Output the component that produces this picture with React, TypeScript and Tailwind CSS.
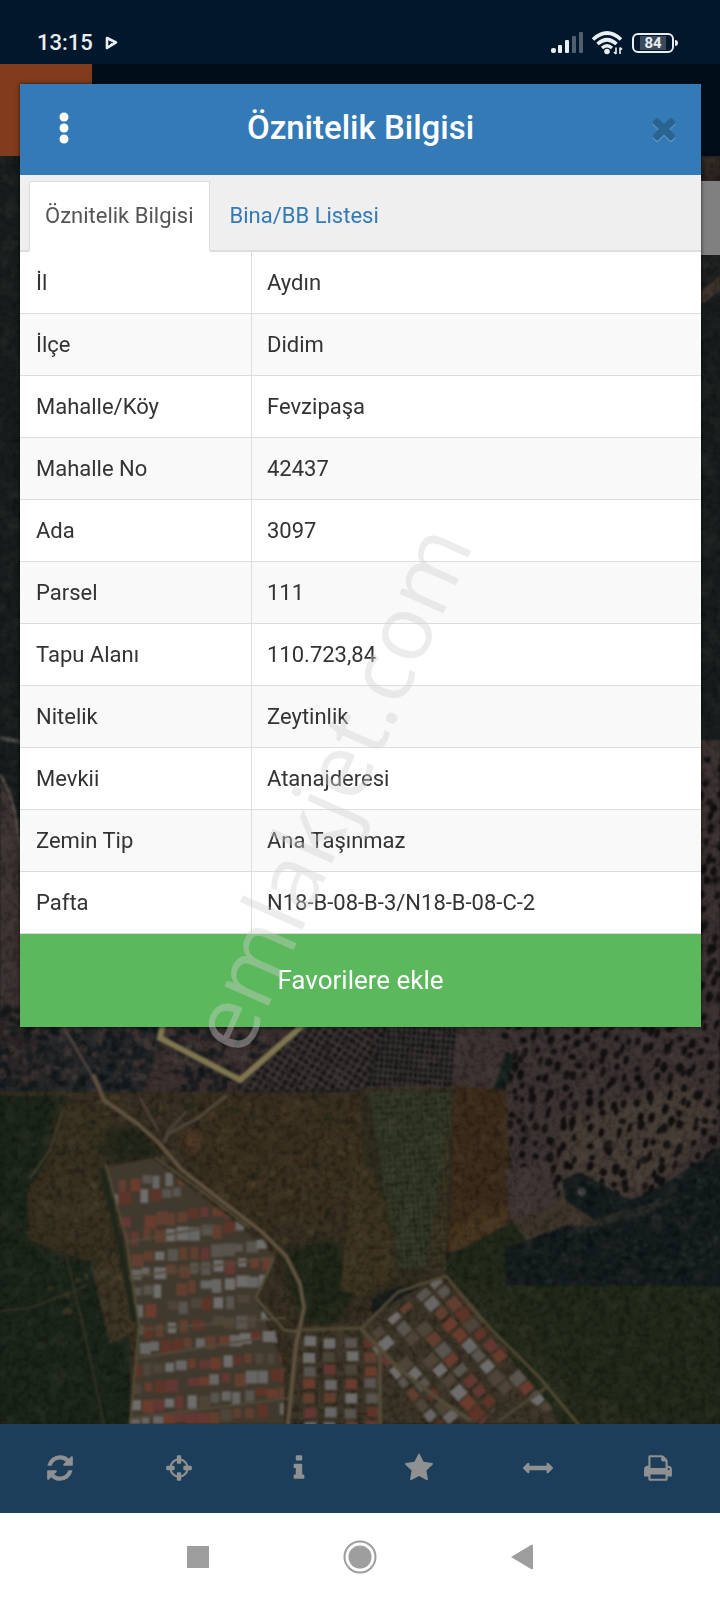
import React, { useState } from "react";

// Small seeded generator so the aerial map always draws the same way
const createRandom = (seed: number) => {
  let s = seed;
  return () => {
    s = (s * 16807) % 2147483647;
    return s / 2147483647;
  };
};

const ATTRIBUTES = [
  { label: "İl", value: "Aydın" },
  { label: "İlçe", value: "Didim" },
  { label: "Mahalle/Köy", value: "Fevzipaşa" },
  { label: "Mahalle No", value: "42437" },
  { label: "Ada", value: "3097" },
  { label: "Parsel", value: "111" },
  { label: "Tapu Alanı", value: "110.723,84" },
  { label: "Nitelik", value: "Zeytinlik" },
  { label: "Mevkii", value: "Atanajderesi" },
  { label: "Zemin Tip", value: "Ana Taşınmaz" },
  { label: "Pafta", value: "N18-B-08-B-3/N18-B-08-C-2" },
];

const TOOLS = [
  {
    name: "Yenile",
    path: "M1639 1056q0 5-1 7-64 268-268 434.5t-478 166.5q-146 0-282.5-55t-243.5-157l-129 129q-19 19-45 19t-45-19-19-45v-448q0-26 19-45t45-19h448q26 0 45 19t19 45-19 45l-137 137q71 66 161 102t187 36q134 0 250-65t186-179q11-17 53-117 8-23 30-23h192q13 0 22.5 9.5t9.5 22.5zm25-800v448q0 26-19 45t-45 19h-448q-26 0-45-19t-19-45 19-45l138-138q-148-137-349-137-134 0-250 65t-186 179q-11 17-53 117-8 23-30 23h-199q-13 0-22.5-9.5t-9.5-22.5v-7q65-268 270-434.5t480-166.5q146 0 284 55.5t245 156.5l130-129q19-19 45-19t45 19 19 45z",
  },
  {
    name: "Konum",
    path: "M1325 1024h-109q-26 0-45-19t-19-45v-128q0-26 19-45t45-19h109q-32-108-112.5-188.5t-188.5-112.5v109q0 26-19 45t-45 19h-128q-26 0-45-19t-19-45v-109q-108 32-188.5 112.5t-112.5 188.5h109q26 0 45 19t19 45v128q0 26-19 45t-45 19h-109q32 108 112.5 188.5t188.5 112.5v-109q0-26 19-45t45-19h128q26 0 45 19t19 45v109q108-32 188.5-112.5t112.5-188.5zm339-192v128q0 26-19 45t-45 19h-143q-37 161-154.5 278.5t-278.5 154.5v143q0 26-19 45t-45 19h-128q-26 0-45-19t-19-45v-143q-161-37-278.5-154.5t-154.5-278.5h-143q-26 0-45-19t-19-45v-128q0-26 19-45t45-19h143q37-161 154.5-278.5t278.5-154.5v-143q0-26 19-45t45-19h128q26 0 45 19t19 45v143q161 37 278.5 154.5t154.5 278.5h143q26 0 45 19t19 45z",
  },
  {
    name: "Bilgi",
    path: "M1216 1344v128q0 26-19 45t-45 19h-512q-26 0-45-19t-19-45v-128q0-26 19-45t45-19h64v-384h-64q-26 0-45-19t-19-45v-128q0-26 19-45t45-19h384q26 0 45 19t19 45v576h64q26 0 45 19t19 45zm-128-1152v192q0 26-19 45t-45 19h-256q-26 0-45-19t-19-45v-192q0-26 19-45t45-19h256q26 0 45 19t19 45z",
  },
  {
    name: "Favoriler",
    path: "M1728 647q0 22-26 48l-363 354 86 500q1 7 1 20 0 21-10.5 35.5t-30.5 14.5q-19 0-40-12l-449-236-449 236q-22 12-40 12-21 0-31.5-14.5t-10.5-35.5q0-6 2-20l86-500-364-354q-25-27-25-48 0-37 56-46l502-73 225-455q19-41 49-41t49 41l225 455 502 73q56 9 56 46z",
  },
  {
    name: "Ölçüm",
    path: "M1792 896q0 26-19 45l-256 256q-19 19-45 19t-45-19-19-45v-128h-1024v128q0 26-19 45t-45 19-45-19l-256-256q-19-19-19-45t19-45l256-256q19-19 45-19t45 19 19 45v128h1024v-128q0-26 19-45t45-19 45 19l256 256q19 19 19 45z",
  },
  {
    name: "Yazdır",
    path: "M448 1536h896v-256h-896v256zm0-640h896v-384h-160q-40 0-68-28t-28-68v-160h-640v640zm1152 64q0-26-19-45t-45-19-45 19-19 45 19 45 45 19 45-19 19-45zm128 0v416q0 13-9.5 22.5t-22.5 9.5h-224v160q0 40-28 68t-68 28h-960q-40 0-68-28t-28-68v-160h-224q-13 0-22.5-9.5t-9.5-22.5v-416q0-79 56.5-135.5t135.5-56.5h64v-544q0-40 28-68t68-28h672q40 0 88 20t76 48l152 152q28 28 48 76t20 88v256h64q79 0 135.5 56.5t56.5 135.5z",
  },
];

const CLOSE_PATH =
  "M1490 1322q0 40-28 68l-136 136q-28 28-68 28t-68-28l-294-294-294 294q-28 28-68 28t-68-28l-136-136q-28-28-28-68t28-68l294-294-294-294q-28-28-28-68t28-68l136-136q28-28 68-28t68 28l294 294 294-294q28-28 68-28t68 28l136 136q28 28 28 68t-28 68l-294 294 294 294q28 28 28 68z";

const ROOFS = ["#5e3428", "#693c2e", "#633834", "#686664", "#58544e", "#4e4437", "#613f30", "#6f6d6b"];

const buildHouses = () => {
  const rand = createRandom(17);
  const pick = () => ROOFS[Math.floor(rand() * ROOFS.length)];
  const west: React.ReactNode[] = [];
  const south: React.ReactNode[] = [];
  const east: React.ReactNode[] = [];

  [1176, 1190, 1214, 1230, 1252, 1268, 1286, 1304, 1324, 1342, 1364, 1382, 1400, 1417].forEach((y, r) => {
    for (let x = 108; x < 290; x += 10 + rand() * 3) {
      if (rand() < 0.06) continue;
      west.push(
        <rect key={`${r}-${x}`} x={x} y={y - (x - 130) * 0.1 + rand() * 3} width={7 + rand() * 6} height={8 + rand() * 6} fill={pick()} />
      );
    }
  });
  [302, 322, 344, 364].forEach((x) => {
    for (let y = 1336; y < 1424; y += 14) {
      south.push(<rect key={`${x}-${y}`} x={x + rand() * 3} y={y + rand() * 3} width={12} height={10} fill={pick()} />);
    }
  });
  for (let row = -1; row < 9; row++) {
    for (let col = 0; col < 14; col++) {
      if (rand() < 0.08) continue;
      east.push(
        <rect
          key={`${row}-${col}`}
          x={col * 14}
          y={row * 19 - (row % 2) * 3}
          width={9 + rand() * 4}
          height={11 + rand() * 3}
          fill={pick()}
        />
      );
    }
  }
  return { west, south, east };
};

const buildTrees = () => {
  const rand = createRandom(91);
  const plateau: React.ReactNode[] = [];
  const forest: React.ReactNode[] = [];
  const scrub: React.ReactNode[] = [];
  const woods: React.ReactNode[] = [];

  // One tree per loose grid cell keeps the olive grove evenly spread
  for (let gx = 505; gx < 720; gx += 13) {
    for (let gy = 760; gy < 1240; gy += 13) {
      const x = gx + rand() * 11;
      const y = gy + rand() * 11;
      plateau.push(
        <ellipse key={`${gx}-${gy}`} cx={x} cy={y} rx={2 + rand() * 1.8} ry={2.8 + rand() * 3} fill="#131011" transform={`rotate(15 ${x} ${y})`} />
      );
    }
  }
  for (let i = 0; i < 420; i++) {
    forest.push(
      <ellipse key={i} cx={rand() * 320} cy={1000 + rand() * 92} rx={2 + rand() * 4} ry={1.5 + rand() * 4} fill={rand() < 0.7 ? "#10171b" : "#433735"} opacity={0.7} />
    );
  }
  for (let i = 0; i < 300; i++) {
    const x = 50 + rand() * 330;
    scrub.push(
      <ellipse key={i} cx={x} cy={1095 + rand() * 220} rx={1 + rand() * 4} ry={1 + rand() * 3} fill={rand() < 0.55 ? "#1f2618" : "#54452c"} opacity={0.5} />
    );
  }
  for (let i = 0; i < 420; i++) {
    woods.push(
      <ellipse key={i} cx={500 + rand() * 220} cy={1150 + rand() * 136} rx={1.5 + rand() * 3} ry={1 + rand() * 2} fill={rand() < 0.6 ? "#0d1416" : "#232b2b"} opacity={0.8} />
    );
  }
  return { plateau, forest, scrub, woods };
};

const AerialMap = () => {
  const houses = buildHouses();
  const trees = buildTrees();

  return (
    <svg
      className="absolute inset-0 h-full w-full"
      viewBox="0 156 720 1268"
      preserveAspectRatio="xMidYMid slice"
      aria-hidden="true"
    >
      <defs>
        <filter id="grain" x="0" y="0" width="100%" height="100%" colorInterpolationFilters="sRGB">
          <feTurbulence type="fractalNoise" baseFrequency="0.16" numOctaves="4" seed="4" />
          <feColorMatrix values="0 0 0 0 0  0 0 0 0 0  0 0 0 0 0  3 0 0 0 -1.3" />
        </filter>
        <filter id="speckle" x="0" y="0" width="100%" height="100%" colorInterpolationFilters="sRGB">
          <feTurbulence type="fractalNoise" baseFrequency="0.06" numOctaves="4" seed="11" />
          <feColorMatrix values="0 0 0 0 .5  0 0 0 0 .46  0 0 0 0 .4  0 3 0 0 -1.4" />
        </filter>
        <filter id="soften" colorInterpolationFilters="sRGB">
          <feGaussianBlur stdDeviation="0.9" />
        </filter>
        <filter id="patch" colorInterpolationFilters="sRGB">
          <feGaussianBlur stdDeviation="5" />
        </filter>
        <pattern id="orchard" width="7" height="7" patternUnits="userSpaceOnUse" patternTransform="rotate(32)">
          <circle cx="3.5" cy="3.5" r="2.3" fill="#131315" />
        </pattern>
        <pattern id="rows" width="5" height="6" patternUnits="userSpaceOnUse" patternTransform="rotate(5)">
          <rect x="1" y="1" width="3" height="4" fill="#111314" />
        </pattern>
        <pattern id="grove" width="5" height="6" patternUnits="userSpaceOnUse" patternTransform="rotate(-4)">
          <path d="M0 0H5M0 0V6" stroke="#615b42" strokeWidth="1" />
        </pattern>
        <clipPath id="west-block">
          <path d="M107 1167L152 1158 180 1180 222 1212 262 1238 275 1256 256 1298 275 1330 284 1368 284 1424H130L139 1325 126 1240Z" />
        </clipPath>
        <clipPath id="east-block">
          <path d="M372 1332L436 1279 447 1280 490 1330 556 1408 546 1412 512 1388 482 1424H430L372 1348Z" />
        </clipPath>
        <clipPath id="woods">
          <path d="M562 1180L580 1172 630 1200 652 1192 720 1148V1286H505V1248L566 1226 600 1224 566 1200Z" />
        </clipPath>
      </defs>

      <g filter="url(#soften)">
        <rect y="156" width="720" height="1268" fill="#171d1d" />
        <rect x="700" y="156" width="20" height="26" fill="#2c2521" />
        <rect x="700" y="254" width="20" height="40" fill="#1d211f" />
        <path d="M720 276L700 292V306L720 290Z" fill="#3f342f" />
        <path d="M700 740H720V1010H700Z" fill="#3a3130" />

        {/* bare ground on the left edge */}
        <path d="M0 738L24 742 60 740" stroke="#4c4b4b" strokeWidth="4" fill="none" />
        <path d="M0 782L16 810 24 960 40 1040 0 1020Z" fill="#3b3231" />
        <path d="M0 775Q18 800 22 870T40 1040" stroke="#584e4a" strokeWidth="3" fill="none" />

        <path d="M0 1010H330V1100H0Z" fill="#242628" />
        <path d="M0 1010H48L36 1090 0 1080Z" fill="#2a2526" />
        <path d="M170 1020L300 1020 240 1100H140Z" fill="#382e2d" />
        {trees.forest}

        {/* plateau with olive trees */}
        <path d="M450 1010L700 740H720V1150L560 1250 500 1246 448 1090Z" fill="#3b3231" />
        <path d="M560 1120L690 1080 720 1120 650 1190 560 1200Z" fill="#463c36" filter="url(#patch)" />
        {trees.plateau}
        <path d="M506 1052L514 1056 505 1092 494 1088Z" fill="#14211e" />

        <path d="M300 1020H462L448 1090H240Z" fill="#3a3332" />
        <path d="M300 1020H390L366 1092H240Z" fill="url(#orchard)" />
        <path d="M385 1020H460L452 1086H366Z" fill="url(#rows)" />

        {/* fields */}
        <rect y="1092" width="372" height="332" fill="#352d1f" />
        <path d="M0 1096H68L58 1140 46 1165 26 1190 30 1240 90 1262 130 1340 130 1424H0Z" fill="#1a2419" />
        <path d="M60 1100L108 1110 106 1160 116 1240 80 1258 26 1238 44 1170Z" fill="#373020" filter="url(#patch)" />
        <path d="M88 1252H122L138 1330 110 1344Z" fill="#3b3323" />
        <rect x="200" y="1096" width="170" height="120" fill="#392e1e" filter="url(#patch)" />
        {trees.scrub}
        <path d="M108 1128L150 1126 158 1156 106 1164Z" fill="#1e2518" opacity=".8" filter="url(#patch)" />
        <path d="M280 1250L330 1240 372 1270 330 1330 300 1320Z" fill="#1e2617" filter="url(#patch)" />
        <path d="M180 1132H200V1154L184 1148Z" fill="#60402a" filter="url(#patch)" opacity=".7" />

        <path d="M360 1088H454L446 1280 430 1286 400 1286 368 1300Z" fill="#302c1d" />
        <path d="M370 1092H452L440 1180 425 1268H400L384 1190Z" fill="#29301f" />
        <path d="M370 1092H452L446 1270H400L384 1190Z" fill="url(#grove)" opacity=".7" />
        <path d="M356 1150L384 1200 396 1276 362 1296 340 1290Z" fill="#3b321f" />
        <path d="M454 1086L506 1090 512 1212 500 1232 448 1252Z" fill="#3a2a1a" />
        <path d="M448 1225L512 1205 506 1228 450 1256Z" fill="#47351f" filter="url(#patch)" />
        <path d="M512 1222L566 1192 600 1225 640 1222 520 1248Z" fill="#3c3429" />
        <path d="M505 1170L550 1162 556 1205 510 1222Z" fill="#3e3433" />

        {/* woods and the meadow below */}
        <path d="M446 1258L512 1222 560 1280 720 1280V1424H580L500 1330 448 1280Z" fill="#202818" />
        <path d="M562 1180L580 1172 630 1200 652 1192 720 1148V1286H505V1248L566 1226 600 1224 566 1200Z" fill="#151c1d" />
        <g clipPath="url(#woods)">{trees.woods}</g>
        <path d="M575 1228L610 1214 655 1202 680 1196 650 1214 600 1226Z" fill="#30302c" opacity=".6" />
        <circle cx="582" cy="1192" r="4" fill="#4c4c4c" />
        <path d="M720 1286V1424H580L505 1300Z" fill="#1f2819" />
        <path d="M362 1320L440 1276 500 1330 560 1424H290V1330Z" fill="#3a3326" />
        <path d="M450 1276L500 1285 570 1380 650 1424H560L490 1330Z" fill="#242a1a" />
      </g>

      <rect y="156" width="720" height="1268" filter="url(#grain)" opacity=".25" />
      <rect y="156" width="720" height="1268" filter="url(#speckle)" opacity=".1" />

      <g filter="url(#soften)">
        <path d="M107 1167L152 1158 222 1212 275 1256 256 1298 284 1368V1424H130L139 1325 126 1240Z" fill="#40392d" />
        <g clipPath="url(#west-block)">{houses.west}</g>
        {houses.south}
        <g clipPath="url(#east-block)">
          <g transform="translate(436 1274) rotate(49)">{houses.east}</g>
        </g>

        {/* roads */}
        <g fill="none" strokeLinecap="round" strokeLinejoin="round">
          <path d="M106 1165L126 1240 139 1325 130 1424" stroke="#545039" strokeWidth="2" />
          <path d="M102 1170L120 1245 134 1320" stroke="#1f261a" strokeWidth="5" />
          <path d="M138 1330L285 1318M138 1358L262 1338M128 1242L215 1226M130 1277L272 1258M132 1418L290 1398" stroke="#524b3b" strokeWidth="2" />
          <path d="M156 1158L200 1190 250 1228" stroke="#564e3b" strokeWidth="2" />
          <path d="M273 1260L256 1298 284 1330 300 1332" stroke="#544d3b" strokeWidth="3" />
          <path d="M64 1028L90 1072 106 1104" stroke="#4b423e" strokeWidth="3" />
          <path d="M94 1076L104 1100 138 1124 158 1142 182 1170 218 1198 262 1232 286 1256 300 1284 304 1308 296 1345 288 1424" stroke="#605240" strokeWidth="4" />
          <path d="M226 1096L198 1118 168 1134 164 1142" stroke="#50493c" strokeWidth="3" />
          <path d="M186 1112L166 1134M140 1098L158 1130" stroke="#4b4034" strokeWidth="3" />
          <path d="M300 1330L362 1328 398 1292 446 1276 490 1328 540 1378 578 1424" stroke="#504934" strokeWidth="3" />
          <path d="M362 1330L400 1370 440 1400 470 1420M380 1350V1424" stroke="#524b37" strokeWidth="4" />
          <path d="M500 1420L548 1386" stroke="#4a4534" strokeWidth="3" />
          <path d="M0 1311L30 1308 86 1286M66 1254L84 1330 104 1424" stroke="#333325" strokeWidth="2" />
          <path d="M62 1112L50 1150 30 1178" stroke="#463e2d" strokeWidth="2" />
        </g>
        <path d="M166 1010L160 1038 240 1080 318 1012" fill="none" stroke="#807650" strokeWidth="6" />
      </g>

      <rect x="690" y="181" width="30" height="74" fill="#808080" />
    </svg>
  );
};

const StatusBar = () => (
  <div className="flex h-16 items-end justify-between bg-[#01172b] pr-[42px] pb-[7px] pl-[37px] text-[#e8eef2]">
    <div className="flex items-center gap-3">
      <span className="text-[22px] leading-7 font-medium">13:15</span>
      <svg width="13" height="14" viewBox="0 0 13 14" aria-hidden="true">
        <path d="M2 2L11 6.500L2 12Z" fill="none" stroke="currentColor" strokeWidth="2.600" strokeLinejoin="round" />
        <path d="M2 12L7 7" stroke="currentColor" strokeWidth="1" />
      </svg>
    </div>
    <div className="flex h-7 items-center gap-2">
      <svg width="33" height="22" viewBox="0 0 33 22" aria-hidden="true">
        <rect x="0" y="16" width="5" height="5" rx="2" fill="currentColor" />
        <rect x="7" y="13" width="4" height="8" rx="1" fill="currentColor" />
        <rect x="14" y="8" width="4" height="13" rx="1" fill="currentColor" />
        <rect x="21" y="4" width="4" height="17" rx="1" fill="#506070" />
        <rect x="28" y="0" width="4" height="21" rx="1" fill="#506070" />
      </svg>
      <svg width="32" height="24" viewBox="0 0 32 24" fill="none" stroke="currentColor" aria-hidden="true">
        <path d="M1 8.500Q15 -4.500 29 8.500" strokeWidth="3.600" />
        <path d="M5.500 13Q15 4.500 24.500 13" strokeWidth="3.600" />
        <path d="M10 17Q15 12.500 20 17" strokeWidth="3.200" />
        <circle cx="15" cy="20.500" r="2.800" fill="currentColor" stroke="none" />
        <path d="M24 16.500V23M22 21L24 23M28 23V16.500M30 18.500L28 16.500" strokeWidth="1.600" />
      </svg>
      <div className="flex items-center gap-px">
        <span className="flex h-5 w-[42px] items-center justify-center rounded-md border-2 border-current">
          <span className="bg-[#3a4a5a] px-1 text-[15px] leading-[14px] font-bold">84</span>
        </span>
        <span className="h-[6px] w-[3px] rounded-r-sm bg-current" />
      </div>
    </div>
  </div>
);

const AttributeDialog = () => {
  const [tab, setTab] = useState("info");

  return (
    <section
      role="dialog"
      aria-label="Öznitelik Bilgisi"
      className="absolute top-[84px] right-[19px] left-5 bg-white shadow-[0_0_4px_rgba(0,0,0,0.7)]"
    >
      <header className="flex h-[91px] items-center bg-[#337ab7] px-5 pb-[3px] text-white">
        <button aria-label="Menü" className="flex size-12 items-center justify-center">
          <svg width="10" height="32" viewBox="0 0 10 32" fill="currentColor">
            <circle cx="5" cy="5" r="4.500" />
            <circle cx="5" cy="16" r="4.500" />
            <circle cx="5" cy="27" r="4.500" />
          </svg>
        </button>
        <h1 className="flex-1 text-center text-[33px] leading-10 font-medium">Öznitelik Bilgisi</h1>
        <button aria-label="Kapat" className="flex size-12 items-center justify-end">
          <svg width="34" height="34" viewBox="0 0 1792 1792">
            <path d={CLOSE_PATH} fill="#5e95c5" transform="translate(0 90)" />
            <path d={CLOSE_PATH} fill="#29638f" />
          </svg>
        </button>
      </header>

      <div role="tablist" className="flex h-[77px] items-stretch border-b-2 border-[#ddd] bg-[#efefef] pt-[6px] pl-[9px] text-[22px]">
        <button
          role="tab"
          aria-selected={tab === "info"}
          onClick={() => setTab("info")}
          className="-mb-[2px] border border-b-2 border-[#ddd] border-b-white bg-white px-[15px] pb-[2px] text-[#555]"
        >
          Öznitelik Bilgisi
        </button>
        <button
          role="tab"
          aria-selected={tab === "list"}
          onClick={() => setTab("list")}
          className="px-5 text-[#337ab7]"
        >
          Bina/BB Listesi
        </button>
      </div>

      <table className="w-full table-fixed border-separate border-spacing-0 text-left text-[22px] leading-8 text-[#333]">
        <tbody>
          {ATTRIBUTES.map((row) => (
            <tr key={row.label} className="h-[62px] even:bg-[#f9f9f9]">
              <th scope="row" className="w-[232px] border-r border-b border-[#ddd] pl-4 font-normal">
                {row.label}
              </th>
              <td className="border-b border-[#ddd] pl-[15px]">{row.value}</td>
            </tr>
          ))}
        </tbody>
      </table>

      <button className="block h-[93px] w-full bg-[#5cb85c] text-[26px] text-white">
        Favorilere ekle
      </button>
    </section>
  );
};

export default function App() {
  return (
    <div className="relative flex min-h-screen flex-col overflow-hidden bg-white font-['Roboto',sans-serif]">
      <StatusBar />
      <div className="h-[92px] bg-[#010e1a]">
        <div className="h-full w-[92px] bg-[#823b1c]" />
      </div>
      <main className="relative flex-1 bg-[#181d1d]">
        <AerialMap />
      </main>
      <nav className="grid h-[89px] grid-cols-6 bg-[#1c3e5b] pr-[2px] pb-[2px] text-[#8f9091]">
        {TOOLS.map((tool) => (
          <button key={tool.name} aria-label={tool.name} className="flex items-center justify-center">
            <svg width="30" height="30" viewBox="0 0 1792 1792" fill="currentColor">
              <path d={tool.path} />
            </svg>
          </button>
        ))}
      </nav>
      <div className="mx-auto grid h-[87px] w-[486px] grid-cols-3 text-[#9e9e9e]">
        <button aria-label="Son uygulamalar" className="flex items-center justify-center">
          <span className="size-[22px] bg-current" />
        </button>
        <button aria-label="Ana ekran" className="flex items-center justify-center">
          <svg width="34" height="34" viewBox="0 0 34 34">
            <circle cx="17" cy="17" r="15.500" fill="none" stroke="currentColor" strokeWidth="2" />
            <circle cx="17" cy="17" r="11.500" fill="currentColor" />
          </svg>
        </button>
        <button aria-label="Geri" className="flex items-center justify-center">
          <svg width="22" height="26" viewBox="0 0 22 26" fill="currentColor">
            <path d="M0 13L20 1Q22 0 22 2V24Q22 26 20 25Z" />
          </svg>
        </button>
      </div>

      <AttributeDialog />

      <span className="pointer-events-none absolute top-[973px] left-[254px] origin-bottom-left rotate-[-66deg] font-['Open_Sans',sans-serif] text-[90px] leading-none font-medium text-[#cfcfcf]/40">
        emlakjet.com
      </span>
    </div>
  );
}
